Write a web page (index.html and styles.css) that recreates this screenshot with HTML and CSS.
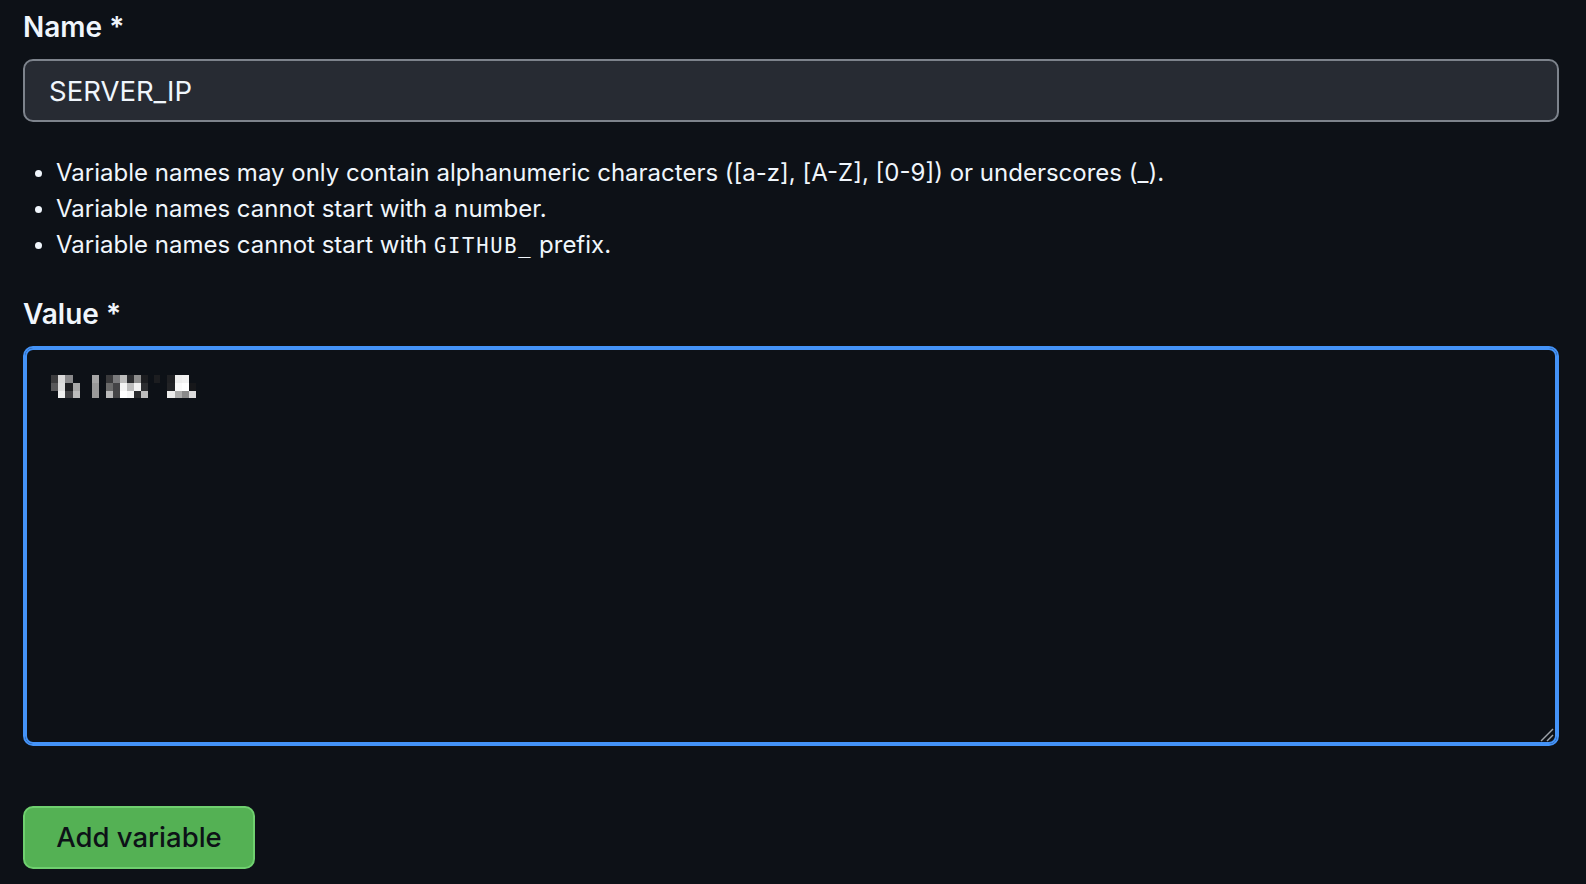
FILE: index.html
```html
<!DOCTYPE html>
<html lang="en">
<head>
<meta charset="utf-8">
<title>Add variable</title>
<link rel="stylesheet" href="styles.css">
</head>
<body>
<form class="form">
  <div class="field">
    <label class="label" for="name">Name *</label>
    <input class="input" id="name" type="text" value="SERVER_IP">
  </div>
  <ul class="notes">
    <li>Variable names may only contain alphanumeric characters ([a-z], [A-Z], [0-9]) or underscores (_).</li>
    <li>Variable names cannot start with a number.</li>
    <li>Variable names cannot start with <code class="code">GITHUB_</code> prefix.</li>
  </ul>
  <div class="field field-value">
    <label class="label">Value *</label>
    <div class="textarea">
      <svg class="mosaic" width="150" height="24" viewBox="0 0 150 24" aria-hidden="true">
        <rect x="0" y="0" width="7" height="8" fill="#3c3c3e"/>
        <rect x="7" y="0" width="7" height="8" fill="#d9d9d9"/>
        <rect x="14" y="0" width="8" height="8" fill="#8a8a8c"/>
        <rect x="0" y="8" width="7" height="8" fill="#58585a"/>
        <rect x="7" y="8" width="7" height="8" fill="#dedede"/>
        <rect x="14" y="8" width="8" height="8" fill="#1d1e21"/>
        <rect x="22" y="8" width="7" height="8" fill="#a8a8a8"/>
        <rect x="7" y="16" width="7" height="7" fill="#efefef"/>
        <rect x="14" y="16" width="8" height="7" fill="#3f3f42"/>
        <rect x="22" y="16" width="7" height="7" fill="#bdbdbd"/>
        <rect x="41" y="0" width="7" height="8" fill="#a6a6a6"/>
        <rect x="41" y="8" width="7" height="8" fill="#999999"/>
        <rect x="41" y="16" width="7" height="7" fill="#9a9a9a"/>
        <rect x="55" y="0" width="7" height="8" fill="#3a3a3c"/>
        <rect x="62" y="0" width="7" height="8" fill="#7a7a7c"/>
        <rect x="69" y="0" width="7" height="8" fill="#bcbcbc"/>
        <rect x="76" y="0" width="7" height="8" fill="#2a2b2e"/>
        <rect x="83" y="0" width="7" height="8" fill="#8e8e8e"/>
        <rect x="90" y="0" width="7" height="8" fill="#1c1d20"/>
        <rect x="55" y="8" width="7" height="8" fill="#6a6a6a"/>
        <rect x="62" y="8" width="7" height="8" fill="#444446"/>
        <rect x="69" y="8" width="7" height="8" fill="#f4f4f4"/>
        <rect x="76" y="8" width="7" height="8" fill="#bcbcbc"/>
        <rect x="83" y="8" width="7" height="8" fill="#f2f2f2"/>
        <rect x="90" y="8" width="7" height="8" fill="#2c2d30"/>
        <rect x="55" y="16" width="7" height="7" fill="#bababa"/>
        <rect x="62" y="16" width="7" height="7" fill="#454547"/>
        <rect x="69" y="16" width="7" height="7" fill="#ffffff"/>
        <rect x="76" y="16" width="7" height="7" fill="#f6f6f6"/>
        <rect x="83" y="16" width="7" height="7" fill="#2a2b2e"/>
        <rect x="90" y="16" width="7" height="7" fill="#bdbdbd"/>
        <rect x="103" y="0" width="6" height="8" fill="#1c1d20"/>
        <rect x="116" y="0" width="8" height="8" fill="#1f2023"/>
        <rect x="124" y="0" width="7" height="8" fill="#eeeeee"/>
        <rect x="131" y="0" width="7" height="8" fill="#f2f2f2"/>
        <rect x="116" y="8" width="8" height="8" fill="#222326"/>
        <rect x="124" y="8" width="7" height="8" fill="#fafafa"/>
        <rect x="131" y="8" width="7" height="8" fill="#ffffff"/>
        <rect x="138" y="8" width="7" height="8" fill="#16171a"/>
        <rect x="116" y="16" width="8" height="7" fill="#ececec"/>
        <rect x="124" y="16" width="7" height="7" fill="#acacac"/>
        <rect x="131" y="16" width="7" height="7" fill="#8a8a8a"/>
        <rect x="138" y="16" width="7" height="7" fill="#dcdcdc"/>
      </svg>
      <svg class="grip" width="14" height="14" viewBox="0 0 14 14" aria-hidden="true">
        <line x1="1" y1="13" x2="13" y2="1" stroke="#9ea3aa" stroke-width="1.4"/>
        <line x1="7" y1="13" x2="13" y2="7" stroke="#9ea3aa" stroke-width="1.4"/>
      </svg>
    </div>
  </div>
  <button class="btn-primary" type="button">Add variable</button>
</form>
</body>
</html>
```
FILE: styles.css
```css
html, body {
  margin: 0;
  padding: 0;
  background: #0d1117;
}

body {
  font-family: Inter, "Noto Sans", "Liberation Sans", sans-serif;
  color: #f0f6fc;
}

.form {
  display: flex;
  flex-direction: column;
  align-items: flex-start;
  padding: 10px 27px 0 23px;
}

.field {
  display: flex;
  flex-direction: column;
  width: 100%;
}

.label {
  font-size: 28px;
  font-weight: 600;
  line-height: 35px;
  margin-bottom: 14px;
}

.input {
  box-sizing: border-box;
  width: 100%;
  height: 63px;
  margin: 0;
  padding: 0 24px;
  border: 2px solid #7d838c;
  border-radius: 10px;
  background: #272b33;
  color: #f0f6fc;
  font-family: Inter, "Noto Sans", "Liberation Sans", sans-serif;
  font-size: 27.5px;
  outline: none;
}

.notes {
  margin: 33px 0 0 0;
  padding: 0 0 0 33px;
  font-size: 24px;
  line-height: 35.8px;
  color: #f0f6fc;
}

.notes li::marker {
  font-size: 22px;
}

.code {
  font-family: "DejaVu Sans Mono", "Liberation Mono", monospace;
  font-size: 20.5px;
  letter-spacing: 1.7px;
}

.field-value {
  margin-top: 32.5px;
}

.field-value .label {
  margin-bottom: 14px;
}

.textarea {
  position: relative;
  box-sizing: border-box;
  width: 100%;
  height: 400px;
  border: 2px solid #4493f8;
  box-shadow: inset 0 0 0 2px #4493f8;
  border-radius: 10px;
  padding: 27px 24px;
}

.mosaic {
  display: block;
  margin-left: 2px;
}

.grip {
  position: absolute;
  right: 3px;
  bottom: 2px;
}

.btn-primary {
  margin-top: 60px;
  box-sizing: border-box;
  width: 232px;
  height: 63px;
  padding: 0;
  border: 2px solid #6fd06f;
  border-radius: 10px;
  background: #54b154;
  color: #0d1117;
  font-family: Inter, "Noto Sans", "Liberation Sans", sans-serif;
  font-size: 27.5px;
  font-weight: 500;
  cursor: pointer;
}
```
